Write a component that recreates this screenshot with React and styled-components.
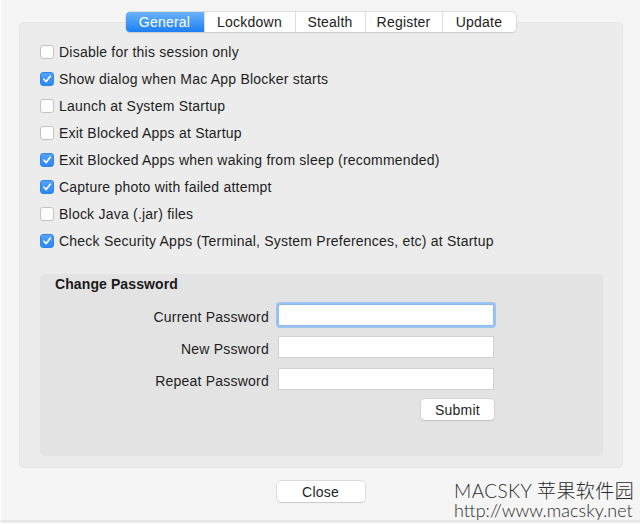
import React from 'react';
import styled, { createGlobalStyle } from 'styled-components';

const GlobalStyle = createGlobalStyle`
  html, body {
    margin: 0;
    padding: 0;
    background: #f5f5f5;
  }
  body {
    font-family: "Liberation Sans", Arial, sans-serif;
    font-size: 14px;
    letter-spacing: 0.22px;
    color: #1e1e1e;
  }
`;

const tabs = [
  { name: 'General', w: 78 },
  { name: 'Lockdown', w: 90 },
  { name: 'Stealth', w: 69 },
  { name: 'Register', w: 76 },
  { name: 'Update', w: 73 },
];

const options = [
  { label: 'Disable for this session only', checked: false },
  { label: 'Show dialog when Mac App Blocker starts', checked: true },
  { label: 'Launch at System Startup', checked: false },
  { label: 'Exit Blocked Apps at Startup', checked: false },
  { label: 'Exit Blocked Apps when waking from sleep (recommended)', checked: true },
  { label: 'Capture photo with failed attempt', checked: true },
  { label: 'Block Java (.jar) files', checked: false },
  { label: 'Check Security Apps (Terminal, System Preferences, etc) at Startup', checked: true },
];

const fields = [
  { label: 'Current Password', focused: true },
  { label: 'New Pssword', focused: false },
  { label: 'Repeat Password', focused: false },
];

function Check({ checked }) {
  return (
    <Box $checked={checked}>
      {checked && (
        <svg width="10" height="10" viewBox="0 0 10 10">
          <path d="M2 5.2 L4.2 7.6 L8.2 2.2" fill="none" stroke="#fff" strokeWidth="1.6" strokeLinecap="round" strokeLinejoin="round" />
        </svg>
      )}
    </Box>
  );
}

function App() {
  return (
    <Window>
      <GlobalStyle />
      <TabView>
        <TabBar>
          {tabs.map((t, i) => (
            <Tab key={t.name} $w={t.w} $active={i === 0}>{t.name}</Tab>
          ))}
        </TabBar>
        <Panel>
          <OptionList>
            {options.map((o) => (
              <Option key={o.label}>
                <Check checked={o.checked} />
                <span>{o.label}</span>
              </Option>
            ))}
          </OptionList>
          <Group>
            <GroupTitle>Change Password</GroupTitle>
            <Form>
              {fields.map((f) => (
                <React.Fragment key={f.label}>
                  <FieldLabel>{f.label}</FieldLabel>
                  <Field $focused={f.focused} />
                </React.Fragment>
              ))}
              <span />
              <ButtonRow>
                <Button $w={73}>Submit</Button>
              </ButtonRow>
            </Form>
          </Group>
        </Panel>
      </TabView>
      <Footer>
        <Button $w={88}>Close</Button>
      </Footer>
      {/* watermark sits over the window corner */}
      <Watermark>
        <Brand>MACSKY 苹果软件园</Brand>
        <Url>http://www.macsky.net</Url>
      </Watermark>
    </Window>
  );
}

const Window = styled.div`
  position: relative;
  height: 522px;
  padding: 12px 18px 0;
  box-sizing: border-box;
  border-bottom: 2px solid #e6e6e6;
  border-left: 1px solid #fbfbfb;
`;

const TabView = styled.div`
  display: flex;
  flex-direction: column;
`;

const TabBar = styled.div`
  display: flex;
  align-self: center;
  height: 20px;
  margin-bottom: -10px;
  position: relative;
  z-index: 1;
  border-radius: 4px;
  box-shadow: 0 0 0 0.5px #c4c4c4, 0 1px 1px rgba(0, 0, 0, 0.12);
  background: #fff;
`;

const Tab = styled.div`
  width: ${(p) => p.$w}px;
  display: flex;
  align-items: center;
  justify-content: center;
  font-size: 14px;
  color: ${(p) => (p.$active ? '#fff' : '#222')};
  background: ${(p) => (p.$active ? 'linear-gradient(#6cb3fa, #1c7ff4)' : 'transparent')};
  border-left: ${(p) => (p.$active ? 'none' : '1px solid #dedede')};
  &:first-child {
    border-radius: 4px 0 0 4px;
    border-left: none;
  }
  &:last-child {
    border-radius: 0 4px 4px 0;
  }
`;

const Panel = styled.div`
  width: 604px;
  height: 446px;
  box-sizing: border-box;
  background: #ececec;
  border: 1px solid #e4e4e4;
  border-radius: 5px;
  padding: 15px 19px 0 20px;
  display: flex;
  flex-direction: column;
`;

const OptionList = styled.div`
  display: flex;
  flex-direction: column;
`;

const Option = styled.label`
  display: flex;
  align-items: center;
  gap: 5px;
  height: 27px;
  color: #1e1e1e;
`;

const Box = styled.span`
  width: 14px;
  height: 14px;
  flex: none;
  box-sizing: border-box;
  border-radius: 3px;
  display: flex;
  align-items: center;
  justify-content: center;
  background: ${(p) => (p.$checked ? 'linear-gradient(#55a2f8, #2d87f4)' : '#fff')};
  border: 1px solid ${(p) => (p.$checked ? '#2f84ea' : '#c2c2c2')};
`;

const Group = styled.div`
  margin-top: 20px;
  height: 182px;
  box-sizing: border-box;
  background: #e3e3e3;
  border-radius: 4px;
  padding: 2px 0 0 15px;
`;

const GroupTitle = styled.div`
  font-weight: bold;
  line-height: 16px;
  letter-spacing: 0.1px;
  color: #1a1a1a;
`;

const Form = styled.div`
  display: grid;
  grid-template-columns: 214px 216px;
  column-gap: 9px;
  row-gap: 10px;
  align-items: center;
  margin-top: 12px;
`;

const FieldLabel = styled.div`
  text-align: right;
  color: #1e1e1e;
  padding-top: 4px;
`;

const Field = styled.div`
  height: 22px;
  box-sizing: border-box;
  background: #fff;
  border: 1px solid ${(p) => (p.$focused ? '#8fbbec' : '#d2d2d2')};
  box-shadow: ${(p) => (p.$focused ? '0 0 0 2px #9cc4f2' : 'none')};
  border-radius: ${(p) => (p.$focused ? '2px' : '0')};
`;

const ButtonRow = styled.div`
  display: flex;
  justify-content: flex-end;
  margin-top: -1px;
`;

const Button = styled.div`
  width: ${(p) => p.$w}px;
  height: 21px;
  box-sizing: border-box;
  display: flex;
  align-items: center;
  justify-content: center;
  background: #fff;
  border-radius: 4px;
  box-shadow: 0 0 0 0.5px #c6c6c6, 0 1px 1px rgba(0, 0, 0, 0.15);
  color: #1e1e1e;
`;

const Footer = styled.div`
  display: flex;
  justify-content: center;
  margin-top: 13px;
`;

const Watermark = styled.div`
  position: absolute;
  right: 6px;
  bottom: 0;
  width: 180px;
  font-family: Lato, "Noto Sans CJK SC", sans-serif;
  font-weight: 300;
  color: #2b2b2b;
  letter-spacing: 0;
`;

const Brand = styled.div`
  font-size: 19px;
  line-height: 21px;
  letter-spacing: 0.4px;
  white-space: nowrap;
`;

const Url = styled.div`
  font-size: 18px;
  line-height: 19px;
  white-space: nowrap;
`;

export default App;
